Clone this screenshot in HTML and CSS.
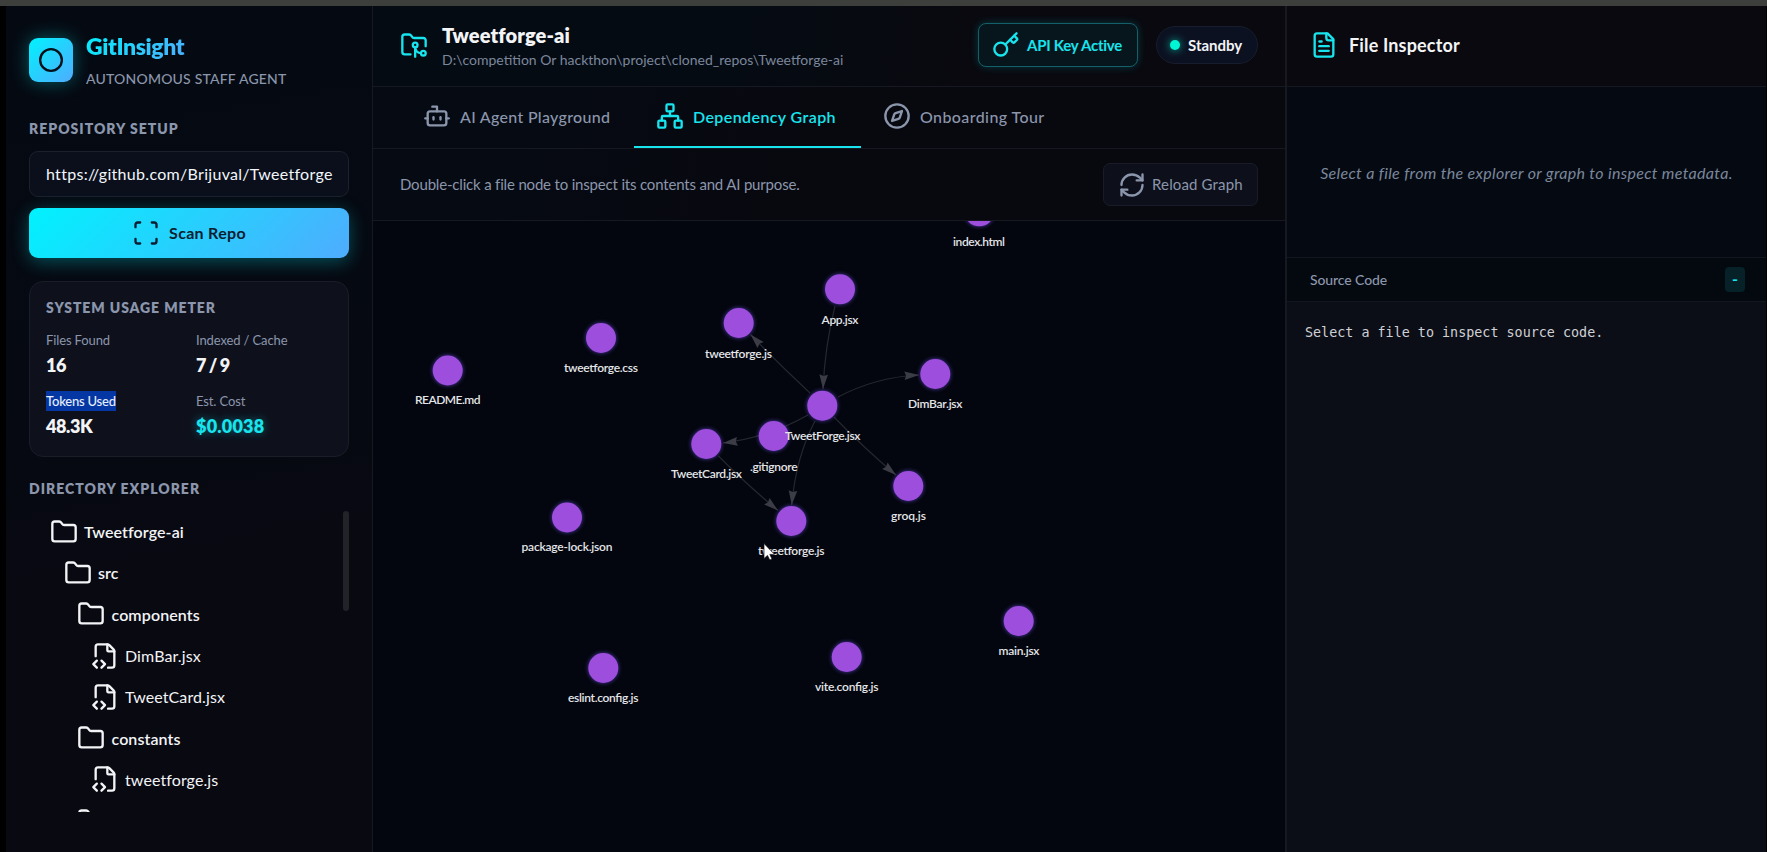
FILE: index.html
```html
<!DOCTYPE html>
<html lang="en">
<head>
    <meta charset="UTF-8">
    <meta name="viewport" content="width=device-width, initial-scale=1.0">
    <title>GitInsight</title>
    <link rel="stylesheet" href="styles.css">
</head>
<body>
    <svg class="sprite" xmlns="http://www.w3.org/2000/svg">
        <symbol id="i-folder" viewBox="0 0 24 24"><path d="M20 20a2 2 0 0 0 2-2V8a2 2 0 0 0-2-2h-7.9a2 2 0 0 1-1.69-.9L9.6 3.9A2 2 0 0 0 7.93 3H4a2 2 0 0 0-2 2v13a2 2 0 0 0 2 2Z"/></symbol>
        <symbol id="i-file-code" viewBox="0 0 24 24"><path d="M4 12.15V4a2 2 0 0 1 2-2h8a2.4 2.4 0 0 1 1.706.706l3.588 3.588A2.4 2.4 0 0 1 20 8v12a2 2 0 0 1-2 2h-3.35"/><path d="M14 2v5a1 1 0 0 0 1 1h5"/><path d="m5 16-3 3 3 3"/><path d="m9 22 3-3-3-3"/></symbol>
    </svg>
    <div class="app">
        <aside class="sidebar">
            <div class="brand">
                <div class="logo">
                    <svg class="icon" viewBox="0 0 24 24"><circle cx="12" cy="12" r="9.3"/></svg>
                </div>
                <div class="brand-text">
                    <h1>GitInsight</h1>
                    <span>AUTONOMOUS STAFF AGENT</span>
                </div>
            </div>
            <h2 class="section-title setup-title">REPOSITORY SETUP</h2>
            <div class="repo-input">https://github.com/Brijuval/Tweetforge</div>
            <button class="scan-btn">
                <svg class="icon" viewBox="0 0 24 24"><path d="M3 7V5a2 2 0 0 1 2-2h2"/><path d="M17 3h2a2 2 0 0 1 2 2v2"/><path d="M21 17v2a2 2 0 0 1-2 2h-2"/><path d="M7 21H5a2 2 0 0 1-2-2v-2"/></svg>
                <span>Scan Repo</span>
            </button>
            <div class="usage">
                <h2 class="section-title usage-title">SYSTEM USAGE METER</h2>
                <div class="usage-grid">
                    <div class="stat"><span class="stat-label">Files Found</span><span class="stat-value">16</span></div>
                    <div class="stat"><span class="stat-label">Indexed / Cache</span><span class="stat-value">7 / 9</span></div>
                    <div class="stat"><span class="stat-label selected">Tokens Used</span><span class="stat-value">48.3K</span></div>
                    <div class="stat"><span class="stat-label">Est. Cost</span><span class="stat-value cost">$0.0038</span></div>
                </div>
            </div>
            <h2 class="section-title explorer-title">DIRECTORY EXPLORER</h2>
            <div class="tree-wrap">
                <div class="tree">
                    <div class="node folder d0"><svg class="icon"><use href="#i-folder"/></svg><span>Tweetforge-ai</span></div>
                    <div class="node folder d1"><svg class="icon"><use href="#i-folder"/></svg><span>src</span></div>
                    <div class="node folder d2"><svg class="icon"><use href="#i-folder"/></svg><span>components</span></div>
                    <div class="node file d3"><svg class="icon"><use href="#i-file-code"/></svg><span>DimBar.jsx</span></div>
                    <div class="node file d3"><svg class="icon"><use href="#i-file-code"/></svg><span>TweetCard.jsx</span></div>
                    <div class="node folder d2"><svg class="icon"><use href="#i-folder"/></svg><span>constants</span></div>
                    <div class="node file d3"><svg class="icon"><use href="#i-file-code"/></svg><span>tweetforge.js</span></div>
                    <div class="node folder d2"><svg class="icon"><use href="#i-folder"/></svg></div>
                </div>
                <div class="scroll-thumb"></div>
            </div>
        </aside>

        <main class="main">
            <header class="topbar">
                <svg class="icon cyan" viewBox="0 0 24 24"><path d="M9 20H4a2 2 0 0 1-2-2V5a2 2 0 0 1 2-2h3.9a2 2 0 0 1 1.69.9l.81 1.2a2 2 0 0 0 1.67.9H20a2 2 0 0 1 2 2v5"/><circle cx="13" cy="12" r="2"/><path d="M18 19c-2.8 0-5-2.2-5-5v8"/><circle cx="20" cy="19" r="2"/></svg>
                <div class="repo-info">
                    <h2>Tweetforge-ai</h2>
                    <span>D:\competition Or hackthon\project\cloned_repos\Tweetforge-ai</span>
                </div>
                <div class="api-key">
                    <svg class="icon" viewBox="0 0 24 24"><path d="m15.5 7.5 2.3 2.3a1 1 0 0 0 1.4 0l2.1-2.1a1 1 0 0 0 0-1.4L19 4"/><path d="m21 2-9.6 9.6"/><circle cx="7.5" cy="15.5" r="5.5"/></svg>
                    <span>API Key Active</span>
                </div>
                <div class="status"><i class="dot"></i><span>Standby</span></div>
            </header>
            <nav class="tabs">
                <div class="tab tab-agent">
                    <svg class="icon" viewBox="0 0 24 24"><path d="M12 8V4H8"/><rect width="16" height="12" x="4" y="8" rx="2"/><path d="M2 14h2"/><path d="M20 14h2"/><path d="M15 13v2"/><path d="M9 13v2"/></svg>
                    <span>AI Agent Playground</span>
                </div>
                <div class="tab tab-graph active">
                    <svg class="icon" viewBox="0 0 24 24"><rect x="16" y="16" width="6" height="6" rx="1"/><rect x="2" y="16" width="6" height="6" rx="1"/><rect x="9" y="2" width="6" height="6" rx="1"/><path d="M5 16v-3a1 1 0 0 1 1-1h12a1 1 0 0 1 1 1v3"/><path d="M12 12V8"/></svg>
                    <span>Dependency Graph</span>
                </div>
                <div class="tab tab-tour">
                    <svg class="icon" viewBox="0 0 24 24"><circle cx="12" cy="12" r="10"/><path d="m16.24 7.76-1.804 5.411a2 2 0 0 1-1.265 1.265L7.76 16.24l1.804-5.411a2 2 0 0 1 1.265-1.265z"/></svg>
                    <span>Onboarding Tour</span>
                </div>
            </nav>
            <div class="graph-bar">
                <p>Double-click a file node to inspect its contents and AI purpose.</p>
                <button class="reload-btn">
                    <svg class="icon" viewBox="0 0 24 24"><path d="M3 12a9 9 0 0 1 9-9 9.75 9.75 0 0 1 6.74 2.74L21 8"/><path d="M21 3v5h-5"/><path d="M21 12a9 9 0 0 1-9 9 9.75 9.75 0 0 1-6.74-2.74L3 16"/><path d="M8 16H3v5"/></svg>
                    <span>Reload Graph</span>
                </button>
            </div>
            <svg class="graph" viewBox="373 221 912 631">
                <defs>
                    <marker id="arrow" viewBox="-15 -5 15 10" refX="0" refY="0" markerWidth="15" markerHeight="10" markerUnits="userSpaceOnUse" orient="auto">
                        <path d="M0 0 L-14.5 4.3 L-13 0 L-14.5 -4.3 Z"/>
                    </marker>
                </defs>
                <g class="edges">
                    <path d="M835 306 Q825 346 823 389"/>
                    <path d="M810 393 Q779 364 750.5 334.5"/>
                    <path d="M838 397 Q876 377 919 375"/>
                    <path d="M808 415 Q767 438 723 443"/>
                    <path d="M815 421 Q796 457 791.7 505"/>
                    <path d="M834 417 Q865 449 896 475"/>
                    <path d="M718.5 456 Q745 483 778 510.5"/>
                </g>
                <g class="nodes">
                    <circle cx="979.3" cy="211.3" r="15"/>
                    <circle cx="840" cy="289.3" r="15"/>
                    <circle cx="738.7" cy="323" r="15"/>
                    <circle cx="601" cy="338" r="15"/>
                    <circle cx="447.7" cy="370.5" r="15"/>
                    <circle cx="935.3" cy="374" r="15"/>
                    <circle cx="822.3" cy="405.7" r="15"/>
                    <circle cx="773.7" cy="436" r="15"/>
                    <circle cx="706.3" cy="444" r="15"/>
                    <circle cx="908.3" cy="486" r="15"/>
                    <circle cx="791.3" cy="521" r="15"/>
                    <circle cx="567" cy="517.5" r="15"/>
                    <circle cx="603.3" cy="668" r="15"/>
                    <circle cx="846.7" cy="657" r="15"/>
                    <circle cx="1018.7" cy="621" r="15"/>
                </g>
                <g class="labels">
                    <text x="953" y="245.5" textLength="52">index.html</text>
                    <text x="821.5" y="323.5" textLength="37">App.jsx</text>
                    <text x="705" y="357.5" textLength="67">tweetforge.js</text>
                    <text x="564" y="372" textLength="74">tweetforge.css</text>
                    <text x="415" y="404" textLength="65.5">README.md</text>
                    <text x="908" y="408" textLength="54.5">DimBar.jsx</text>
                    <text x="785" y="440" textLength="75.5">TweetForge.jsx</text>
                    <text x="750" y="470.5" textLength="47.5">.gitignore</text>
                    <text x="671" y="478" textLength="71">TweetCard.jsx</text>
                    <text x="891" y="520" textLength="35">groq.js</text>
                    <text x="758" y="555" textLength="66.5">tweetforge.js</text>
                    <text x="521.5" y="551" textLength="91">package-lock.json</text>
                    <text x="568" y="702" textLength="70.5">eslint.config.js</text>
                    <text x="815" y="691" textLength="63.5">vite.config.js</text>
                    <text x="998.5" y="655" textLength="41">main.jsx</text>
                </g>
                <path class="cursor" d="M764 543.5 V558.5 L767.5 555.4 L769.8 560 L772 559 L769.8 554.4 H774.5 Z"/>
            </svg>
        </main>

        <aside class="inspector">
            <header class="inspector-head">
                <svg class="icon cyan" viewBox="0 0 24 24"><path d="M15 2H6a2 2 0 0 0-2 2v16a2 2 0 0 0 2 2h12a2 2 0 0 0 2-2V7Z"/><path d="M14 2v4a2 2 0 0 0 2 2h4"/><path d="M10 9H8"/><path d="M16 13H8"/><path d="M16 17H8"/></svg>
                <h2>File Inspector</h2>
            </header>
            <div class="meta-empty"><span>Select a file from the explorer or graph to inspect metadata.</span></div>
            <div class="source-head">
                <span class="source-title">Source Code</span>
                <span class="source-badge">-</span>
            </div>
            <pre class="source">Select a file to inspect source code.</pre>
        </aside>
    </div>
</body>
</html>
```
FILE: styles.css
```css
* {
    box-sizing: border-box;
    margin: 0;
    padding: 0;
}
body {
    height: 852px;
    overflow: hidden;
    background: #000;
    font-family: Lato, "Open Sans", sans-serif;
    color: #f3f4f6;
    border-top: 6px solid #3d3f3d;
    padding: 0 1px 0 6px;
}
.sprite {
    display: none;
}
.app {
    display: grid;
    grid-template-columns: 367px 912px 1fr;
    height: 846px;
    background: #05070f;
}
.icon {
    width: 28px;
    height: 28px;
    flex-shrink: 0;
    fill: none;
    stroke: currentColor;
    stroke-width: 2;
    stroke-linecap: round;
    stroke-linejoin: round;
}
.cyan {
    color: #18e4ee;
}
span, h1, h2, p {
    white-space: nowrap;
}

/* Sidebar */
.sidebar {
    display: flex;
    flex-direction: column;
    padding: 23px 23px 0;
    border-right: 1px solid #171922;
    background: linear-gradient(170deg, #050a12 0%, #060911 50%, #090912 65%, #090912 100%);
}
.brand {
    display: flex;
    align-items: center;
    gap: 13px;
    height: 62px;
}
.logo {
    width: 44px;
    height: 44px;
    display: flex;
    align-items: center;
    justify-content: center;
    border-radius: 9px;
    background: linear-gradient(135deg, #00f2fe, #4facfe);
    box-shadow: 0 0 18px rgba(0, 242, 254, 0.35);
    color: #05101a;
}
.brand-text h1 {
    font-size: 23px;
    line-height: 28px;
    font-weight: 800;
    letter-spacing: -0.4px;
    background: linear-gradient(135deg, #00f2fe, #4facfe);
    -webkit-background-clip: text;
    background-clip: text;
    color: transparent;
    width: 101px;
    margin-bottom: 10px;
}
.brand-text span {
    display: block;
    font-size: 14px;
    line-height: 18px;
    font-weight: 500;
    letter-spacing: 0.2px;
    color: #8b96ac;
}
.section-title {
    font-size: 14px;
    line-height: 18px;
    font-weight: 800;
    letter-spacing: 1px;
    color: #8b96ac;
}
.setup-title {
    margin: 29px 0 13px;
}
.repo-input {
    height: 46px;
    flex-shrink: 0;
    line-height: 43px;
    padding-left: 16px;
    border: 1px solid #1b202c;
    border-radius: 9px;
    background: #0a0f1b;
    font-size: 16px;
    letter-spacing: 0.3px;
    color: #f3f6fa;
}
.scan-btn {
    display: flex;
    align-items: center;
    justify-content: center;
    gap: 9px;
    height: 50px;
    flex-shrink: 0;
    margin-top: 11px;
    border: none;
    border-radius: 9px;
    background: linear-gradient(135deg, #00f2fe, #4facfe);
    box-shadow: 0 4px 18px rgba(0, 242, 254, 0.3);
    font: 700 16px Lato, sans-serif;
    letter-spacing: 0.3px;
    color: #0b1d31;
}
.scan-btn span {
    padding-bottom: 1px;
}
.usage {
    height: 176px;
    flex-shrink: 0;
    margin-top: 23px;
    padding: 17px 16px;
    border: 1px solid #1a1c28;
    border-radius: 14px;
    background: #0e111c;
}
.usage-title {
    letter-spacing: 0.9px;
    margin-bottom: 13px;
}
.usage-grid {
    display: grid;
    grid-template-columns: 150px 1fr;
    row-gap: 14px;
}
.stat {
    display: flex;
    flex-direction: column;
    align-items: flex-start;
    gap: 3px;
    height: 47px;
}
.stat-label {
    font-size: 13px;
    line-height: 20px;
    letter-spacing: -0.12px;
    color: #8b96ac;
}
.stat-label.selected {
    background: #0437a4;
    color: #e8eefb;
    font-weight: 500;
    letter-spacing: -0.2px;
}
.stat-value {
    font-size: 18px;
    line-height: 24px;
    font-weight: 800;
    letter-spacing: -0.4px;
    word-spacing: -1px;
}
.cost {
    color: #18e4ee;
    letter-spacing: 0.2px;
    text-shadow: 0 0 9px rgba(0, 242, 254, 0.4);
}
.explorer-title {
    margin: 23px 0 13px;
}
.tree-wrap {
    display: flex;
    height: 301px;
    justify-content: space-between;
}
.tree {
    overflow: hidden;
    flex: 1;
}
.scroll-thumb {
    width: 6px;
    height: 100px;
    border-radius: 3px;
    background: #222329;
}
.node {
    display: flex;
    align-items: center;
    gap: 6.5px;
    height: 41.3px;
    font-size: 16px;
    letter-spacing: 0.1px;
}
.folder {
    font-weight: 600;
}
.d0 { padding-left: 20.5px; }
.d1 { padding-left: 34.5px; }
.d2 { padding-left: 48px; }
.d3 { padding-left: 61.5px; }

/* Main column */
.main {
    display: flex;
    flex-direction: column;
    min-width: 0;
}
.topbar {
    display: flex;
    align-items: center;
    height: 81px;
    padding: 0 27px 2px;
    border-bottom: 1px solid #171922;
    background: linear-gradient(100deg, #050b13 40%, #09090f 65%);
}
.repo-info {
    flex: 1;
    margin-left: 14px;
    padding-top: 4px;
}
.repo-info h2 {
    font-size: 20px;
    line-height: 24px;
    font-weight: 800;
    letter-spacing: 0.1px;
}
.repo-info span {
    display: block;
    font-size: 14px;
    line-height: 25px;
    color: #7b879c;
}
.api-key {
    display: flex;
    align-items: center;
    gap: 7px;
    width: 160px;
    height: 44px;
    padding-left: 13px;
    border: 1px solid #14606a;
    border-radius: 8px;
    background: #07151c;
    box-shadow: 0 0 9px rgba(0, 242, 254, 0.2);
    color: #18e4ee;
    font-size: 15px;
    font-weight: 700;
    letter-spacing: -0.25px;
}
.status {
    display: flex;
    align-items: center;
    gap: 8px;
    width: 102px;
    height: 38px;
    margin-left: 18px;
    padding-left: 13px;
    border: 1px solid #171d2c;
    border-radius: 19px;
    background: #0c1121;
    font-size: 15px;
    font-weight: 700;
}
.dot {
    width: 10px;
    height: 10px;
    border-radius: 50%;
    background: #00f5d4;
    box-shadow: 0 0 9px #00b8a4;
}
.tabs {
    display: flex;
    height: 62px;
    padding-left: 28px;
    border-bottom: 1px solid #171922;
    background: linear-gradient(100deg, #060a13 20%, #08080f 50%);
}
.tab {
    display: flex;
    align-items: center;
    gap: 9px;
    padding: 0 0 1px 22px;
    border-bottom: 2px solid transparent;
    font-size: 16px;
    font-weight: 500;
    letter-spacing: 0.3px;
    color: #8b96ac;
}
.tab-agent {
    width: 233px;
}
.tab-graph {
    width: 227px;
    letter-spacing: 0.4px;
}
.tab-tour {
    letter-spacing: 0.4px;
}
.tab.active {
    color: #18e4ee;
    border-color: #18e4ee;
    font-weight: 600;
}
.graph-bar {
    display: flex;
    align-items: center;
    justify-content: space-between;
    height: 72px;
    padding: 0 27px;
    border-bottom: 1px solid #171922;
    background: linear-gradient(100deg, #060a13 15%, #08080f 45%);
}
.graph-bar p {
    font-size: 15px;
    letter-spacing: -0.18px;
    padding-bottom: 2px;
    color: #8b96ac;
}
.reload-btn {
    display: flex;
    align-items: center;
    gap: 6px;
    width: 155px;
    height: 43px;
    padding-left: 14px;
    border: 1px solid #191c28;
    border-radius: 7px;
    background: #0d101b;
    font: 15px Lato, sans-serif;
    letter-spacing: 0.15px;
    color: #8b96ac;
}
.reload-btn span {
    padding-bottom: 2px;
}
.graph {
    width: 912px;
    height: 631px;
    background: #03060e;
}
.edges path {
    fill: none;
    stroke: #25272f;
    stroke-width: 1.2;
    marker-end: url(#arrow);
}
#arrow path {
    fill: #3b3c45;
    stroke: none;
    marker-end: none;
}
.nodes circle {
    fill: #9d4edd;
    filter: drop-shadow(0 0 2px rgba(108, 75, 230, 0.75));
}
.labels text {
    font-size: 12px;
    font-weight: 600;
    fill: #e4e5e8;
}
.cursor {
    fill: #fff;
    stroke: #111;
    stroke-width: 0.7;
}

/* Inspector */
.inspector {
    display: flex;
    flex-direction: column;
    min-width: 0;
    border-left: 2px solid #171920;
    background: #050a12;
}
.inspector-head {
    display: flex;
    align-items: center;
    gap: 11px;
    height: 81px;
    padding: 0 0 2px 23px;
    border-bottom: 1px solid #171922;
    background: #09090f;
}
.inspector-head h2 {
    font-size: 18px;
    font-weight: 700;
    letter-spacing: 0.15px;
}
.meta-empty {
    display: flex;
    align-items: center;
    justify-content: center;
    height: 170px;
    font-size: 16px;
    font-style: italic;
    letter-spacing: 0.33px;
    color: #7b879c;
}
.source-head {
    display: flex;
    align-items: center;
    justify-content: space-between;
    height: 45px;
    padding: 0 21px 0 23px;
    border-top: 1px solid #12161f;
    border-bottom: 1px solid #12161f;
    background: #04080f;
}
.source-title {
    font-size: 14px;
    font-weight: 500;
    letter-spacing: -0.1px;
    padding-bottom: 1px;
    color: #8b96ac;
}
.source-badge {
    width: 20px;
    height: 25px;
    line-height: 24px;
    border-radius: 4px;
    background: #062127;
    color: #18e4ee;
    text-align: center;
    font-size: 16px;
    font-weight: 700;
}
.source {
    flex: 1;
    padding: 22px 18px;
    background: #0b0e17;
    font: 13.4px/18px "DejaVu Sans Mono", monospace;
    color: #d0d1d5;
}
```
